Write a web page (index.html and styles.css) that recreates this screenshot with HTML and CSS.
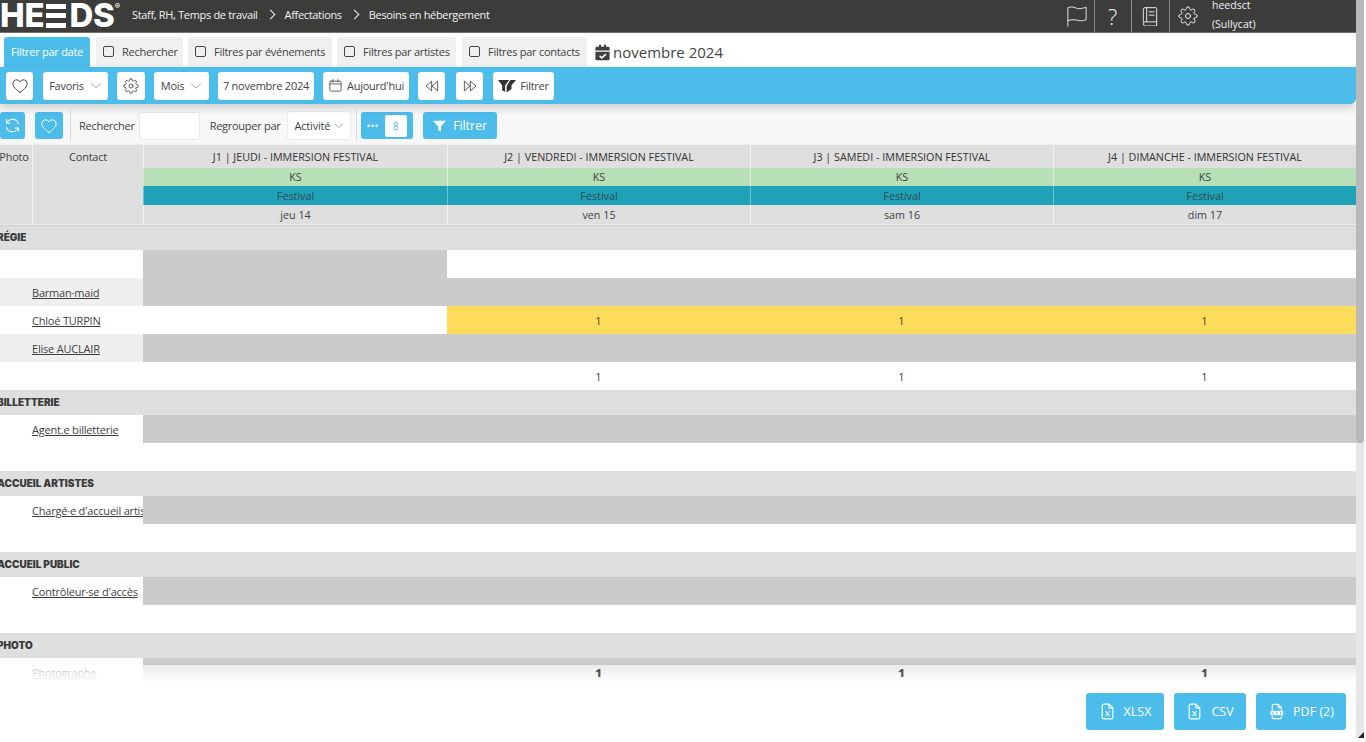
FILE: index.html
```html
<!DOCTYPE html>
<html lang="fr">
<head>
<meta charset="utf-8">
<title>Besoins en hébergement</title>
<link rel="stylesheet" href="styles.css">
</head>
<body>
<svg class="sprite" aria-hidden="true">
  <symbol id="heart" viewBox="0 0 24 24"><path d="M12 20.5S2.500 15 2.500 8.800A5 5 0 0 1 12 6.500a5 5 0 0 1 9.500 2.300C21.500 15 12 20.500 12 20.500z"/></symbol>
  <symbol id="chev" viewBox="0 0 24 24"><path d="M3 8l9 8 9-8"/></symbol>
  <symbol id="gear" viewBox="0 0 24 24"><circle cx="12" cy="12" r="3"/><path d="M19.4 15a1.65 1.65 0 0 0 .33 1.82l.06.06a2 2 0 0 1 0 2.83 2 2 0 0 1-2.83 0l-.06-.06a1.65 1.65 0 0 0-1.82-.33 1.65 1.65 0 0 0-1 1.51V21a2 2 0 0 1-2 2 2 2 0 0 1-2-2v-.09A1.65 1.65 0 0 0 9 19.4a1.65 1.65 0 0 0-1.82.33l-.06.06a2 2 0 0 1-2.83 0 2 2 0 0 1 0-2.83l.06-.06a1.65 1.65 0 0 0 .33-1.82 1.65 1.65 0 0 0-1.51-1H3a2 2 0 0 1-2-2 2 2 0 0 1 2-2h.09A1.65 1.65 0 0 0 4.6 9a1.65 1.65 0 0 0-.33-1.82l-.06-.06a2 2 0 0 1 0-2.83 2 2 0 0 1 2.83 0l.06.06a1.65 1.65 0 0 0 1.82.33H9a1.65 1.65 0 0 0 1-1.51V3a2 2 0 0 1 2-2 2 2 0 0 1 2 2v.09a1.65 1.65 0 0 0 1 1.51 1.65 1.65 0 0 0 1.82-.33l.06-.06a2 2 0 0 1 2.83 0 2 2 0 0 1 0 2.83l-.06.06a1.65 1.65 0 0 0-.33 1.82V9a1.65 1.65 0 0 0 1.51 1H21a2 2 0 0 1 2 2 2 2 0 0 1-2 2h-.09a1.65 1.65 0 0 0-1.51 1z"/></symbol>
  <symbol id="cal" viewBox="0 0 24 24"><rect x="3" y="5" width="18" height="16" rx="2"/><path d="M3 9.500h18M8 2.500v4M16 2.500v4"/></symbol>
  <symbol id="prev" viewBox="0 0 24 24"><path d="M11 5L3 12l8 7zM20 5l-8 7 8 7z"/></symbol>
  <symbol id="next" viewBox="0 0 24 24"><path d="M4 5l8 7-8 7zM13 5l8 7-8 7z"/></symbol>
  <symbol id="funnels" viewBox="0 0 24 18"><path d="M0 1h15L9.500 8v9l-4-2.500V8zM16.500 1H24l-6 7v5l-6.500 4.500V9z"/></symbol>
  <symbol id="funnel" viewBox="0 0 24 24"><path d="M1 3h22l-8.500 10v9l-5-3v-6z"/></symbol>
  <symbol id="sync" viewBox="0 0 24 24"><path d="M20.500 9.500A8.800 8.800 0 0 0 5.500 6L3.500 8.500M3.500 14.500A8.800 8.800 0 0 0 18.500 18l2-2.500M3.500 3.500v5h5M20.500 20.500v-5h-5"/></symbol>
  <symbol id="flag" viewBox="0 0 24 24"><path d="M2 23V3c6-2.500 8 1 12 1 3 0 6-1 8-1.500V16c-3 1-5 1.500-8 1s-7-2-12 0"/></symbol>
  <symbol id="book" viewBox="0 0 24 24"><path d="M4 19V4a2 2 0 0 1 2-2h13a1 1 0 0 1 1 1v16H6.500a2.500 2.500 0 0 0 0 5H20v-5M8 2v17M11 7h6M11 11h6"/></symbol>
  <symbol id="file" viewBox="0 0 24 24"><path d="M14 1.500H7a2.500 2.500 0 0 0-2.500 2.500v16A2.500 2.500 0 0 0 7 22.500h10a2.500 2.500 0 0 0 2.500-2.500V7zM14 1.500V7h5.500M9.500 12l5 6M14.500 12l-5 6"/></symbol>
  <symbol id="pdf" viewBox="0 0 24 24"><path d="M6 10V4a2 2 0 0 1 2-2h6.500L19 6.500V10M14.500 2v4.500H19M6 19v1.500A1.500 1.500 0 0 0 7.500 22h10a1.500 1.500 0 0 0 1.500-1.500V19"/><path class="band" d="M4 11.500h17v5.500H4z"/><path class="bandmark" d="M7 13v2.500M12.500 13v2.500M18 13v2.500"/></symbol>
  <symbol id="calcheck" viewBox="0 0 24 24"><path d="M7 1h3v3h4V1h3v3h3a2 2 0 0 1 2 2v3H2V6a2 2 0 0 1 2-2h3zM2 11h20v10a2 2 0 0 1-2 2H4a2 2 0 0 1-2-2zm14.300 2.500L11 18l-2.500-2-1.300 1.500L11 21l6.700-6z" fill-rule="evenodd"/></symbol>
</svg>

<div class="shell">
  <main class="main">
    <header class="topbar">
      <div class="logo">HE<span class="bars">E</span>DS<sup class="reg">®</sup></div>
      <nav class="crumbs">
        <span>Staff, RH, Temps de travail</span><span class="gt"></span>
        <span>Affectations</span><span class="gt"></span>
        <span>Besoins en hébergement</span>
      </nav>
      <div class="topicons">
        <span class="topicon"><svg class="ic ic-flag"><use href="#flag"/></svg></span>
        <span class="topicon help">?</span>
        <span class="topicon"><svg class="ic ic-book"><use href="#book"/></svg></span>
        <span class="topicon noline"><svg class="ic ic-topgear"><use href="#gear"/></svg></span>
        <span class="user">heedsct<br>(Sullycat)</span>
      </div>
    </header>

    <div class="tabs">
      <span class="tab active">Filtrer par date</span>
      <span class="tab t2"><i class="check"></i>Rechercher</span>
      <span class="tab t3"><i class="check"></i>Filtres par événements</span>
      <span class="tab t4"><i class="check"></i>Filtres par artistes</span>
      <span class="tab t5"><i class="check"></i>Filtres par contacts</span>
      <span class="month"><svg class="ic-cal"><use href="#calcheck"/></svg>novembre 2024</span>
    </div>

    <div class="bar">
      <button class="btn w27"><svg class="ic ic-17"><use href="#heart"/></svg></button>
      <button class="btn w65 ml1">Favoris<svg class="ic chev"><use href="#chev"/></svg></button>
      <button class="btn w28"><svg class="ic ic-16"><use href="#gear"/></svg></button>
      <button class="btn w55">Mois<svg class="ic chev"><use href="#chev"/></svg></button>
      <button class="btn w96">7 novembre 2024</button>
      <button class="btn w86"><svg class="ic ic-14"><use href="#cal"/></svg>Aujourd'hui</button>
      <button class="btn w27"><svg class="ic ic-16"><use href="#prev"/></svg></button>
      <button class="btn w27 ml2"><svg class="ic ic-16"><use href="#next"/></svg></button>
      <button class="btn w61 ml1"><svg class="ic-solid"><use href="#funnels"/></svg>Filtrer</button>
    </div>

    <div class="tools">
      <button class="bluebtn w25"><svg class="ic ic-w"><use href="#sync"/></svg></button>
      <button class="bluebtn w28 ml10"><svg class="ic ic-w ic-heart2"><use href="#heart"/></svg></button>
      <span class="vline ml7"></span>
      <span class="lbl ml8">Rechercher</span>
      <span class="field ml4"></span>
      <span class="lbl ml10">Regrouper par</span>
      <span class="select ml6">Activité<svg class="ic chev2"><use href="#chev"/></svg></span>
      <span class="vline ml5"></span>
      <span class="count ml4"><span class="dots">•••</span><span class="num">8</span></span>
      <button class="bluebtn filter ml10"><svg class="ic-fun"><use href="#funnel"/></svg>Filtrer</button>
    </div>

    <section class="table">
      <div class="thead">
        <div class="th side photo">Photo</div>
        <div class="th side contact">Contact</div>
        <div class="th r1">J1 | JEUDI - IMMERSION FESTIVAL</div>
        <div class="th r1">J2 | VENDREDI - IMMERSION FESTIVAL</div>
        <div class="th r1">J3 | SAMEDI - IMMERSION FESTIVAL</div>
        <div class="th r1">J4 | DIMANCHE - IMMERSION FESTIVAL</div>
        <div class="th r2">KS</div><div class="th r2">KS</div><div class="th r2">KS</div><div class="th r2">KS</div>
        <div class="th r3">Festival</div><div class="th r3">Festival</div><div class="th r3">Festival</div><div class="th r3">Festival</div>
        <div class="th r4">jeu 14</div><div class="th r4">ven 15</div><div class="th r4">sam 16</div><div class="th r4">dim 17</div>
      </div>

      <div class="group">Régie</div>
      <div class="row"><div class="name"></div><div class="off"></div><div></div><div></div><div></div></div>
      <div class="row"><div class="name soft"><a href="#">Barman·maid</a></div><div class="off"></div><div class="off"></div><div class="off"></div><div class="off"></div></div>
      <div class="row"><div class="name"><a href="#">Chloé TURPIN</a></div><div></div><div class="on">1</div><div class="on">1</div><div class="on">1</div></div>
      <div class="row"><div class="name soft"><a href="#">Elise AUCLAIR</a></div><div class="off"></div><div class="off"></div><div class="off"></div><div class="off"></div></div>
      <div class="row"><div class="name"></div><div></div><div class="val">1</div><div class="val">1</div><div class="val">1</div></div>

      <div class="group">Billetterie</div>
      <div class="row"><div class="name"><a href="#">Agent.e billetterie</a></div><div class="off"></div><div class="off"></div><div class="off"></div><div class="off"></div></div>
      <div class="row"></div>

      <div class="group">Accueil artistes</div>
      <div class="row"><div class="name"><a href="#">Chargé·e d'accueil artistes</a></div><div class="off"></div><div class="off"></div><div class="off"></div><div class="off"></div></div>
      <div class="row"></div>

      <div class="group">Accueil public</div>
      <div class="row"><div class="name"><a href="#">Contrôleur·se d'accès</a></div><div class="off"></div><div class="off"></div><div class="off"></div><div class="off"></div></div>
      <div class="row"></div>

      <div class="group">Photo</div>
      <div class="row"><div class="name"><a href="#">Photographe</a></div><div class="off"></div><div class="off"><b class="strong">1</b></div><div class="off"><b class="strong">1</b></div><div class="off"><b class="strong">1</b></div></div>
    </section>

    <footer class="exports">
      <button class="export w78"><svg class="ic ic-exp"><use href="#file"/></svg>XLSX</button>
      <button class="export w72"><svg class="ic ic-exp"><use href="#file"/></svg>CSV</button>
      <button class="export w90"><svg class="ic ic-exp"><use href="#pdf"/></svg>PDF (2)</button>
    </footer>
  </main>
  <aside class="scroll"><div class="thumb"></div><i class="grip"></i></aside>
</div>
</body>
</html>
```
FILE: styles.css
```css
* { box-sizing: border-box; }
html, body { margin: 0; height: 742px; overflow: hidden; background: #fff; }
body { font-family: "Open Sans", "Noto Sans", sans-serif; font-size: 11px; color: #3f3f3f; }
.sprite { display: none; }
.shell { display: flex; width: 1366px; height: 742px; }
.main { position: relative; width: 1356px; height: 742px; overflow: hidden; flex: none; }
.scroll { width: 8px; height: 738px; background: #e6e6e6; position: relative; flex: none; }
.thumb { height: 443px; background: #b9b9b9; border-radius: 0 0 3px 3px; }
.grip { position: absolute; right: 0; bottom: 0; width: 0; height: 0; border-style: solid; border-width: 0 0 6px 6px; border-color: transparent transparent #222 transparent; }

.ic { fill: none; stroke: currentColor; stroke-width: 1.5; stroke-linecap: round; stroke-linejoin: round; flex: none; }

/* top bar */
.topbar { height: 33px; background: #3c3c3b; border-bottom: 1px solid #6f6f6f; color: #f2f2f2; display: flex; align-items: center; }
.logo { width: 132px; flex: none; font-family: Inter, "Liberation Sans", sans-serif; font-weight: 800; font-size: 33px; line-height: 32px; letter-spacing: -.2px; color: #fff; height: 32px; margin-top: -2px; white-space: nowrap; }
.bars { color: transparent; display: inline-block; height: 24px; line-height: 24px; width: 20px; margin: 0 3px 0 2px; vertical-align: -1px; overflow: hidden; background: linear-gradient(#fff 0 5px, transparent 5px 9.500px, #fff 9.500px 14.500px, transparent 14.500px 19px, #fff 19px 24px); }
.reg { font-size: 8px; font-weight: 600; vertical-align: top; line-height: 14px; }
.crumbs { display: flex; align-items: center; padding-bottom: 3px; font-size: 11px; letter-spacing: -.33px; white-space: nowrap; }
.gt { width: 7px; height: 7px; border-top: 1.500px solid #f2f2f2; border-right: 1.500px solid #f2f2f2; transform: rotate(45deg); margin: 0 11px 0 9px; }
.topicons { margin-left: auto; display: flex; align-items: stretch; height: 32px; }
.topicon { width: 37.500px; border-right: 1px solid #8b8b8b; display: flex; align-items: center; justify-content: center; }
.topicon.noline { border-right: 0; }
.ic-flag { width: 22px; height: 22px; stroke-width: 1; transform: translateX(2px); }
.ic-book { width: 20px; height: 20px; stroke-width: 1.100; }
.ic-topgear { width: 20px; height: 20px; stroke-width: 1.200; }
.help { font-size: 22px; font-weight: 300; line-height: 32px; }
.user { width: 149px; padding: 0 0 0 5px; font-size: 10.500px; line-height: 19px; margin-top: -4px; white-space: nowrap; height: 36px; }

/* tabs */
.tabs { height: 34px; display: flex; align-items: flex-end; padding-left: 4px; background: #fff; }
.tab { height: 30px; background: #f0f0f0; border-radius: 3px 3px 0 0; display: flex; align-items: center; padding-bottom: 1px; font-size: 11px; letter-spacing: -.27px; white-space: nowrap; }
.tab.active { width: 86px; background: #4cbceb; color: #fff; justify-content: center; }
.t2 { width: 87px; margin-left: 6px; padding-left: 7px; }
.t3 { width: 144px; margin-left: 5px; padding-left: 7px; }
.t4 { width: 119px; margin-left: 5px; padding-left: 7px; }
.t5 { width: 125px; margin-left: 6px; padding-left: 7px; }
.check { width: 11px; height: 11px; border: 1.500px solid #444; border-radius: 2px; margin-right: 8px; flex: none; }
.month { display: flex; align-items: center; height: 30px; margin-left: 7px; font-size: 15px; color: #444; white-space: nowrap; }
.ic-cal { width: 17px; height: 17px; fill: #3f3f3f; margin-right: 2px; }

/* blue bar */
.bar { height: 37px; background: #4cbceb; border-radius: 0 0 6px 0; padding: 5px 0 0 6px; display: flex; gap: 9px; box-shadow: 0 4px 8px rgba(0,0,0,.16); position: relative; z-index: 2; }
.btn { height: 28px; background: #fff; border: 0; border-radius: 3px; padding: 0 0 1px; display: flex; align-items: center; justify-content: center; gap: 4px; font: inherit; font-size: 11px; letter-spacing: -.25px; color: #444; white-space: nowrap; }
.w27 { width: 27px; } .w28 { width: 28px; } .w55 { width: 55px; } .w65 { width: 65px; } .w96 { width: 96px; } .w86 { width: 86px; } .w61 { width: 61px; } .w25 { width: 25px; }
.ml1 { margin-left: 1px; } .ml2 { margin-left: 2px; }
.ic-16 { width: 16px; height: 16px; stroke-width: 1.300; }
.ic-17 { width: 18px; height: 18px; stroke-width: 1.300; }
.ic-14 { width: 15px; height: 15px; stroke-width: 1.300; }
.chev { width: 12px; height: 12px; stroke-width: 1.100; margin-left: 2px; color: #666; }
.ic-solid { width: 18px; height: 14px; fill: #333; }

/* tool row */
.tools { height: 41px; background: #f7f7f7; display: flex; align-items: center; padding-top: 2px; }
.bluebtn { height: 27px; background: #4cbceb; border: 0; border-radius: 3px; padding: 0; color: #fff; display: flex; align-items: center; justify-content: center; font: inherit; flex: none; }
.ic-w { width: 17px; height: 17px; stroke-width: 1.500; }
.ic-heart2 { width: 18px; height: 18px; stroke-width: 1.300; }
.vline { width: 1px; height: 31px; background: #dcdcdc; flex: none; }
.ml4 { margin-left: 4px; } .ml5 { margin-left: 5px; } .ml6 { margin-left: 6px; } .ml7 { margin-left: 7px; } .ml8 { margin-left: 8px; } .ml10 { margin-left: 10px; }
.lbl { font-size: 11px; letter-spacing: -.27px; white-space: nowrap; }
.field { width: 61px; height: 28px; background: #fff; border: 1px solid #e9e9e9; border-radius: 2px; }
.select { width: 64px; height: 29px; background: #fff; border: 1px solid #ebebeb; border-radius: 2px; display: flex; align-items: center; padding-left: 7px; gap: 4px; letter-spacing: -.2px; white-space: nowrap; }
.chev2 { width: 10px; height: 10px; stroke-width: 1.200; color: #666; }
.count { width: 52px; height: 27px; background: #4cbceb; border-radius: 3px; display: flex; align-items: center; justify-content: space-between; padding: 0 6px; color: #fff; flex: none; }
.dots { font-size: 10.500px; line-height: 12px; }
.num { width: 22px; height: 22px; background: #fff; color: #4cbceb; border-radius: 2px; display: flex; align-items: center; justify-content: center; font-size: 10px; }
.filter { width: 74px; font-size: 12.500px; letter-spacing: -.1px; gap: 6px; }
.ic-fun { width: 15px; height: 14px; fill: #fff; }

/* table */
.table { margin-left: -4px; width: 1360px; }
.thead { display: grid; grid-template-columns: 36px 111px 304px 303px 303px 303px; grid-template-rows: 23px 18px 19px 19px; height: 79px; background: #dfdfdf; box-shadow: 0 1px 3px rgba(0,0,0,.14); position: relative; z-index: 1; }
.th { display: flex; align-items: center; justify-content: center; font-size: 10.750px; border-left: 1px solid #f3f3f3; white-space: nowrap; }
.side { grid-row: 1 / 5; align-items: flex-start; padding-top: 4px; font-size: 11px; letter-spacing: -.25px; background: #dfdfdf; }
.photo { grid-column: 1; border-left: 0; }
.contact { grid-column: 2; }
.r1 { color: #333; }
.r2 { background: #b7dfb8; border-left-color: #d5ecd6; }
.r3 { background: #1fa2b7; border-left-color: #6cc3d1; color: #2f4a52; }
.r4 { background: #dfdfdf; }
.group { height: 25px; background: #dfdfdf; display: flex; align-items: center; padding: 0 0 1px 1px; font-family: Inter, Lato, sans-serif; font-weight: 900; font-size: 10px; text-transform: uppercase; color: #3a3a3a; }
.thead + .group { margin-top: 1px; }
.row { display: grid; grid-template-columns: 147px 304px 303px 303px 303px; height: 28px; background: #fff; }
.row > div { display: flex; align-items: center; justify-content: center; font-size: 11px; padding-top: 1px; }
.row > .name { justify-content: flex-start; padding-left: 36px; letter-spacing: -.2px; overflow: hidden; white-space: nowrap; }
.name a { color: #3f3f3f; text-decoration: underline; }
.row > .soft { background: #efefef; }
.row > .off { background: #cbcbcb; }
.row > .on { background: #ffdc5c; }
.strong { position: relative; z-index: 4; font-weight: 800; color: #555; }

/* exports */
.exports { position: absolute; left: 0; right: 0; bottom: 0; height: 77px; padding: 28px 10px 0 0; display: flex; justify-content: flex-end; gap: 10px; background: linear-gradient(rgba(255,255,255,.6), #fff 17px); z-index: 3; }
.export { height: 37px; background: #4cbceb; border: 0; border-radius: 3px; color: #fff; display: flex; align-items: center; justify-content: center; gap: 8px; font: inherit; font-size: 12.500px; padding: 0; }
.w78 { width: 78px; } .w72 { width: 72px; } .w90 { width: 90px; }
.ic-exp { width: 17px; height: 17px; stroke-width: 1.600; }
.band { fill: currentColor; stroke-width: .6; }
.bandmark { stroke: #4cbceb; stroke-width: 1.500; }
```
